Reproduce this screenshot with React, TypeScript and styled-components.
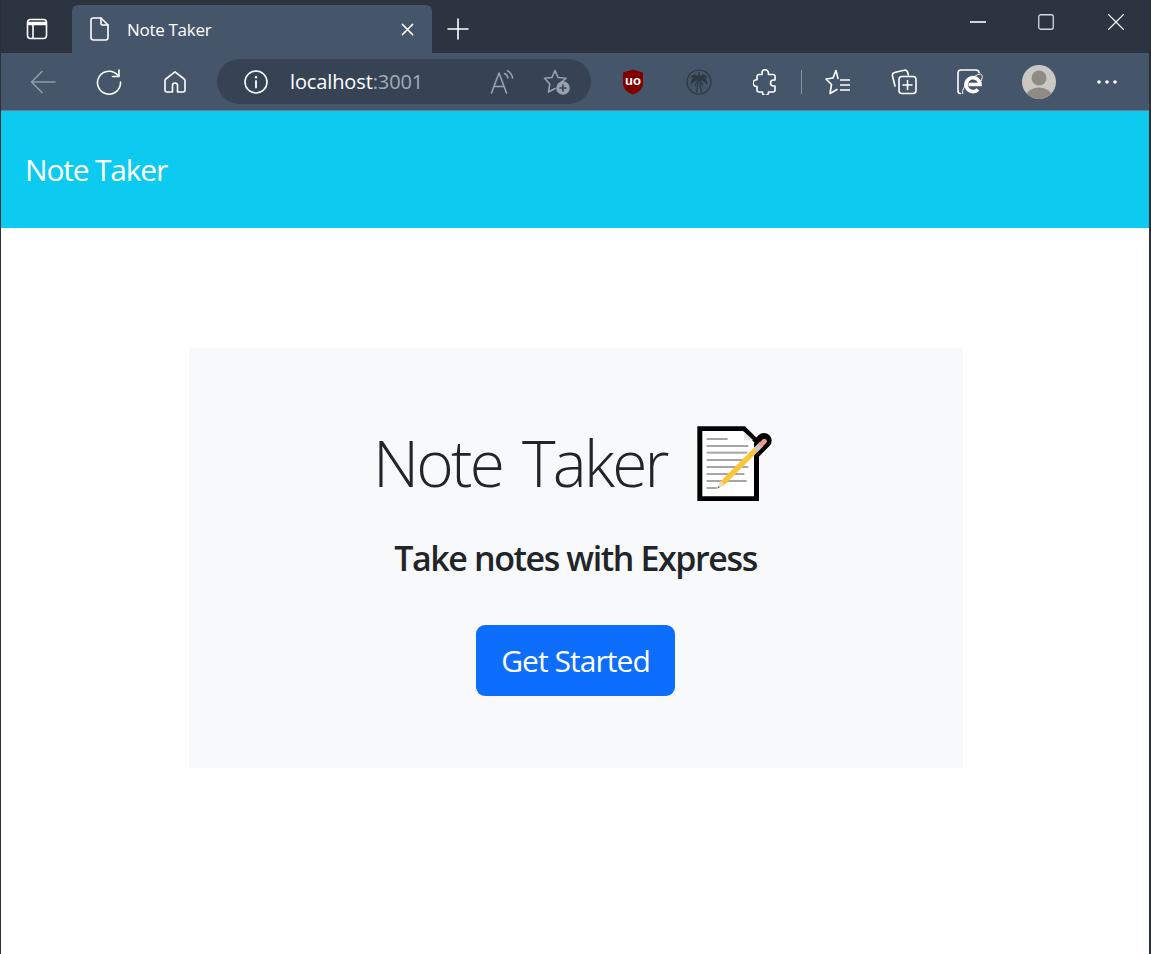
import React from 'react';
import styled, { createGlobalStyle } from 'styled-components';

const GlobalStyle = createGlobalStyle`
  html, body {
    margin: 0;
    padding: 0;
    background: #fff;
  }
`;

const fontStack = `"Open Sans", "Noto Sans", "Liberation Sans", sans-serif`;

const Window = styled.div`
  box-sizing: border-box;
  width: 1151px;
  height: 954px;
  overflow: hidden;
  border-left: 1px solid #2b2f36;
  border-right: 2px solid #2b2f36;
  display: flex;
  flex-direction: column;
  background: #fff;
  font-family: ${fontStack};
`;

const TabStrip = styled.div`
  height: 53px;
  background: #2b3440;
  display: flex;
  align-items: flex-end;
  flex-shrink: 0;
`;

const SidebarToggle = styled.div`
  width: 71px;
  height: 48px;
  display: flex;
  align-items: center;
  justify-content: center;
`;

const Tab = styled.div`
  box-sizing: border-box;
  width: 360px;
  height: 48px;
  background: #45566b;
  border-radius: 6px 6px 0 0;
  display: flex;
  align-items: center;
  padding: 0 18px 0 18px;
  color: #fff;
  font-size: 17px;
  letter-spacing: -0.3px;
`;

const TabTitle = styled.span`
  flex: 1;
  margin-left: 18px;
`;

const NewTab = styled.div`
  width: 52px;
  height: 48px;
  display: flex;
  align-items: center;
  justify-content: center;
`;

const WindowControls = styled.div`
  margin-left: auto;
  align-self: stretch;
  display: flex;
  align-items: flex-start;
`;

const WindowButton = styled.div<{ $width: number }>`
  width: ${(p) => p.$width}px;
  height: 44px;
  display: flex;
  align-items: center;
  justify-content: center;
`;

const Toolbar = styled.div`
  box-sizing: border-box;
  height: 58px;
  background: #45566b;
  border-bottom: 1px solid #6b7c8f;
  display: flex;
  align-items: center;
  padding-left: 9px;
  flex-shrink: 0;
`;

const ToolSlot = styled.div<{ $width?: number }>`
  width: ${(p) => p.$width ?? 66}px;
  height: 46px;
  flex-shrink: 0;
  display: flex;
  align-items: center;
  justify-content: center;
`;

const AddressBar = styled.div`
  box-sizing: border-box;
  width: 374px;
  height: 45px;
  margin: 0 8px 0 9px;
  border-radius: 23px;
  background: #364355;
  display: flex;
  align-items: center;
  padding-left: 27px;
  flex-shrink: 0;
`;

const Address = styled.span`
  margin-left: 22px;
  flex: 1;
  color: #fff;
  font-size: 20px;
  letter-spacing: -0.12px;
`;

const Port = styled.span`
  color: #a3acb8;
`;

const AddressAction = styled.div`
  width: 55px;
  display: flex;
  justify-content: center;
  &:last-child {
    margin-right: 7px;
  }
`;

const Separator = styled.div`
  width: 1px;
  height: 24px;
  margin: 0 3px;
  background: #8695a6;
  flex-shrink: 0;
`;

const Navbar = styled.nav`
  height: 117px;
  flex-shrink: 0;
  background: #0dcaf0;
  display: flex;
  align-items: center;
  padding-left: 24px;
`;

const Brand = styled.a`
  color: #fff;
  font-size: 30px;
  letter-spacing: -1.2px;
`;

const Main = styled.main`
  padding-top: 120px;
`;

const Hero = styled.section`
  box-sizing: border-box;
  width: 774px;
  height: 420px;
  margin-left: 188px;
  background: #f8f9fa;
  color: #212529;
  display: flex;
  flex-direction: column;
  align-items: center;
  padding: 75px 1px 0 0;
`;

const Title = styled.h1`
  margin: 0 6px 0 0;
  display: flex;
  align-items: center;
  gap: 30px;
  height: 80px;
  font-size: 64px;
  font-weight: 300;
  line-height: 80px;
  letter-spacing: -2.75px;
  word-spacing: 6px;
`;

const EmojiFrame = styled.svg`
  flex-shrink: 0;
  margin-top: 2px;
`;

const Subtitle = styled.h4`
  margin: 35px 0 0;
  font-size: 34px;
  font-weight: 600;
  line-height: 41px;
  letter-spacing: -1.4px;
`;

const PrimaryButton = styled.a`
  box-sizing: border-box;
  margin-top: 46px;
  width: 199px;
  height: 71px;
  border-radius: 9px;
  background: #0d6efd;
  color: #fff;
  font-size: 30px;
  letter-spacing: -0.95px;
  display: flex;
  align-items: center;
  justify-content: center;
`;

const Glyph = styled.svg`
  display: block;
  flex-shrink: 0;
  fill: none;
  stroke: #fff;
  stroke-width: 1.6;
  stroke-linecap: round;
  stroke-linejoin: round;
`;

const MemoEmoji = () => (
  <EmojiFrame width={75.33} height={78} viewBox="46 30 226 234">
    <path d="M47 34H190L232 76V258H47Z" fill="#000" />
    <path d="M212 112L247 77" stroke="#000" strokeWidth={46} strokeLinecap="round" />
    <path d="M62 48H184L217 82V244H62Z" fill="#fff" />
    <path d="M187 50L215 76H187Z" fill="#e6e6e6" />
    <g fill="#a6a6a6">
      <rect x={75} y={69} width={63} height={6} />
      <rect x={75} y={90} width={125} height={6} />
      <rect x={75} y={110} width={122} height={6} />
      <rect x={75} y={132} width={110} height={6} />
      <rect x={75} y={153} width={125} height={6} />
      <rect x={75} y={174} width={113} height={6} />
      <rect x={75} y={195} width={120} height={6} />
      <rect x={75} y={216} width={30} height={6} />
    </g>
    <path d="M122 205L225 102" stroke="#fcc535" strokeWidth={16} />
    <path d="M222 105L240 87" stroke="#c9c9c9" strokeWidth={16} />
    <path d="M240 87L248 79" stroke="#ee9a86" strokeWidth={15} strokeLinecap="round" />
    <path d="M116 198L129 211L106 221Z" fill="#f6d8bb" />
    <path d="M111 213L114 217L106 221Z" fill="#555" />
  </EmojiFrame>
);

const App: React.FC = () => (
  <>
    <GlobalStyle />
    <Window>
      <TabStrip>
        <SidebarToggle>
          <Glyph width={22} height={22} viewBox="0 0 22 22">
            <rect x={1.5} y={1.5} width={19} height={19} rx={3} />
            <path d="M2 5.5H20" strokeWidth={3.5} strokeLinecap="butt" />
            <path d="M7 6V20" />
          </Glyph>
        </SidebarToggle>
        <Tab>
          <Glyph width={19} height={24} viewBox="0 0 19 24">
            <path d="M3 1H11L18 8V20.5A2.5 2.5 0 0 1 15.5 23H3.5A2.5 2.5 0 0 1 1 20.5V3A2 2 0 0 1 3 1Z" />
            <path d="M11 1V6.5A1.5 1.5 0 0 0 12.5 8H18" />
          </Glyph>
          <TabTitle>Note Taker</TabTitle>
          <Glyph width={13} height={13} viewBox="0 0 14 14">
            <path d="M1.5 1.5L12.5 12.5M12.5 1.5L1.5 12.5" />
          </Glyph>
        </Tab>
        <NewTab>
          <Glyph width={22} height={22} viewBox="0 0 22 22">
            <path d="M11 1V21M1 11H21" />
          </Glyph>
        </NewTab>
        <WindowControls>
          <WindowButton $width={62}>
            <Glyph width={16} height={2} viewBox="0 0 16 2">
              <path d="M0 1H16" strokeLinecap="butt" />
            </Glyph>
          </WindowButton>
          <WindowButton $width={74}>
            <Glyph width={16} height={16} viewBox="0 0 16 16">
              <rect x={0.75} y={0.75} width={14.5} height={14.5} rx={2} stroke="#d6dadf" strokeWidth={1.3} />
            </Glyph>
          </WindowButton>
          <WindowButton $width={66}>
            <Glyph width={16} height={16} viewBox="0 0 16 16">
              <path d="M.5 .5L15.5 15.5M15.5 .5L.5 15.5" strokeWidth={1.1} />
            </Glyph>
          </WindowButton>
        </WindowControls>
      </TabStrip>
      <Toolbar>
        <ToolSlot>
          <Glyph width={26} height={24} viewBox="0 0 26 24" style={{ stroke: '#8f9baa' }}>
            <path d="M1.5 12H25M12 1.5L1.5 12L12 22.5" />
          </Glyph>
        </ToolSlot>
        <ToolSlot>
          <Glyph width={26} height={26} viewBox="0 0 26 26">
            <path d="M22 6.5A11.5 11.5 0 1 0 24.5 13" />
            <path d="M23 1V7.5H16.5" />
          </Glyph>
        </ToolSlot>
        <ToolSlot>
          <Glyph width={24} height={24} viewBox="0 0 24 24">
            <path d="M9.5 22H4A2 2 0 0 1 2 20V10.5A2 2 0 0 1 2.8 9L12 1.8L21.2 9A2 2 0 0 1 22 10.5V20A2 2 0 0 1 20 22H14.5V15.5A2.5 2.5 0 0 0 9.5 15.5Z" />
          </Glyph>
        </ToolSlot>
        <AddressBar>
          <Glyph width={24} height={24} viewBox="0 0 24 24">
            <circle cx={12} cy={12} r={11} />
            <path d="M12 11V17.5" strokeWidth={1.8} />
            <circle cx={12} cy={7.2} r={0.6} strokeWidth={1.4} />
          </Glyph>
          <Address>
            localhost<Port>:3001</Port>
          </Address>
          <AddressAction>
            <Glyph width={24} height={24} viewBox="0 0 24 24" style={{ stroke: '#98a2ae' }}>
              <path d="M1.5 23L9 3L16.5 23M4 16.5H14" />
              <path d="M14.5 3.5A6 6 0 0 1 18 8M17.5 .8A10 10 0 0 1 22.5 8" />
            </Glyph>
          </AddressAction>
          <AddressAction>
            <Glyph width={28} height={26} viewBox="0 0 28 26" style={{ stroke: '#98a2ae' }}>
              <path d="M18.5 13L23 9.3L15 8.5L12 1.5L9 8.5L1.5 9.3L6.8 15L5.5 23L12 19.5" />
              <circle cx={20} cy={19} r={6} fill="#98a2ae" />
              <path d="M20 16V22M17 19H23" stroke="#364355" strokeWidth={1.6} />
            </Glyph>
          </AddressAction>
        </AddressBar>
        <ToolSlot $width={67}>
          <svg width={22} height={26} viewBox="0 0 22 26">
            <path d="M11 .5L21 3.5V15C21 20 16 24 11 25.5C6 24 1 20 1 15V3.5Z" fill="#800000" />
            <text x={11} y={16} textAnchor="middle" fontFamily="Liberation Sans, sans-serif" fontSize={13} fontWeight={700} fill="#fff">
              uo
            </text>
          </svg>
        </ToolSlot>
        <ToolSlot>
          <svg width={26} height={26} viewBox="0 0 26 26" fill="none" stroke="#2f3742" strokeWidth={1.2}>
            <circle cx={13} cy={13} r={12} />
            <path d="M12 11C12 15 11.5 19 10.5 23.5M14 11C14 15 14.5 19 15.5 23.5" />
            <path
              d="M13 10C11 5.5 8 5 5.5 8C8 7.5 9 8 9.5 8.5C7 9 5.5 11 5.5 14C8 11 10.5 10.5 13 10ZM13 10C15 5.5 18 5 20.5 8C18 7.5 17 8 16.5 8.5C19 9 20.5 11 20.5 14C18 11 15.5 10.5 13 10ZM13 10C11 13 10 14 9 17M13 10C15 13 16 14 17 17M13 10C12.5 7.5 12.5 5.5 13 3.5C13.5 5.5 13.5 7.5 13 10Z"
              fill="#2f3742"
            />
          </svg>
        </ToolSlot>
        <ToolSlot>
          <Glyph width={24} height={26} viewBox="0 0 24 26">
            <path d="M9 5.5V4A3.2 3.2 0 0 1 15.4 4V5.5H20A2 2 0 0 1 22 7.5V11H20.5A3 3 0 0 0 20.5 17H22V21A2 2 0 0 1 20 23H15.5V23.5A3 3 0 0 1 9.5 23.5V23H6A2 2 0 0 1 4 21V17.5H3.5A3.4 3.4 0 0 1 3.5 10.7H4V7.5A2 2 0 0 1 6 5.5Z" />
          </Glyph>
        </ToolSlot>
        <Separator />
        <ToolSlot>
          <Glyph width={26} height={26} viewBox="0 0 26 26">
            <path d="M13 9.5L11 1.5L8 9L1 10L6.5 15.5L5 24.5L12 20.5" />
            <path d="M15 11H25M15 16H25M15 21H25" strokeLinecap="butt" />
          </Glyph>
        </ToolSlot>
        <ToolSlot>
          <Glyph width={26} height={26} viewBox="0 0 26 26">
            <path d="M4 17L1.5 7A3 3 0 0 1 3.5 3.5L13 1.2A3 3 0 0 1 16.7 3.3L17.3 6" />
            <rect x={8} y={7.5} width={17} height={17} rx={3} />
            <path d="M16.5 11.5V20.5M12 16H21" />
          </Glyph>
        </ToolSlot>
        <ToolSlot>
          <svg width={26} height={26} viewBox="0 0 26 26" fill="none" stroke="#fff" strokeWidth={1.6}>
            <path d="M3.5 24.5A2.5 2.5 0 0 1 1 22V4A3 3 0 0 1 4 1H19A3 3 0 0 1 22 3.5" strokeLinecap="round" />
            <path d="M11.5 15.5H23A7 7 0 1 0 21 20.5" strokeWidth={3.6} />
            <path d="M6 25C3 20 16 5.5 23.5 5C26 6 25.5 9 24 12" strokeWidth={1} />
          </svg>
        </ToolSlot>
        <ToolSlot $width={72}>
          <svg width={34} height={34} viewBox="0 0 34 34">
            <defs>
              <clipPath id="avatar-clip">
                <circle cx={17} cy={17} r={17} />
              </clipPath>
            </defs>
            <circle cx={17} cy={17} r={17} fill="#cac8c3" />
            <circle cx={17} cy={13} r={7.5} fill="#8e8b85" />
            <ellipse cx={17} cy={32} rx={13} ry={9.5} fill="#8e8b85" clipPath="url(#avatar-clip)" />
          </svg>
        </ToolSlot>
        <ToolSlot $width={64}>
          <svg width={20} height={4} viewBox="0 0 20 4" fill="#fff">
            <circle cx={2} cy={2} r={1.8} />
            <circle cx={10} cy={2} r={1.8} />
            <circle cx={18} cy={2} r={1.8} />
          </svg>
        </ToolSlot>
      </Toolbar>
      <Navbar>
        <Brand>Note Taker</Brand>
      </Navbar>
      <Main>
        <Hero>
          <Title>
            Note Taker
            <MemoEmoji />
          </Title>
          <Subtitle>Take notes with Express</Subtitle>
          <PrimaryButton>Get Started</PrimaryButton>
        </Hero>
      </Main>
    </Window>
  </>
);

export default App;
